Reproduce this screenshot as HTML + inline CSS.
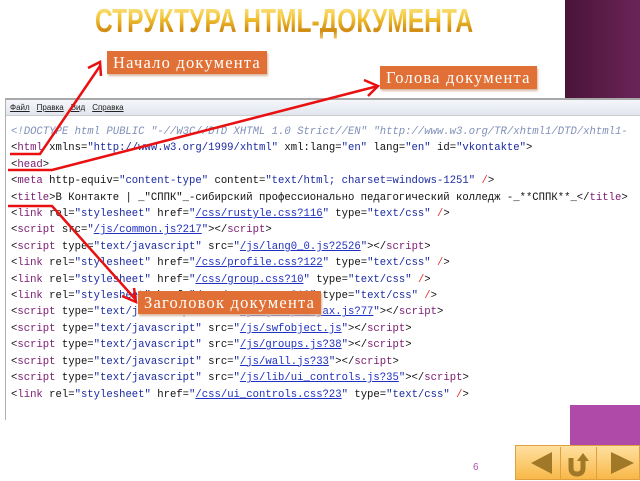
<!DOCTYPE html>
<html><head><meta charset="utf-8"><style>
body{margin:0;width:640px;height:480px;overflow:hidden;background:#fff;position:relative;font-family:"Liberation Sans",sans-serif}
.tr{position:absolute;left:565px;top:0;width:75px;height:98px;background:linear-gradient(90deg,#4a1438,#6a2458)}
.title{position:absolute;left:95px;top:2px;width:560px;font-weight:bold;font-size:33px;line-height:38px;color:#e0a820;background:linear-gradient(#fff2a0,#f0c030 45%,#d08a10 75%,#f6d070);-webkit-background-clip:text;background-clip:text;-webkit-text-fill-color:transparent;transform:scaleX(.745);transform-origin:left top;white-space:nowrap}
.lbl{position:absolute;background:#e07035;color:#fff;font-family:"Liberation Serif","DejaVu Serif",serif;font-size:16.5px;line-height:23px;padding:0 6px;letter-spacing:1.2px;box-shadow:1px 2px 2px #d8b8a0;white-space:nowrap}
.shot{position:absolute;left:5px;top:98px;width:640px;height:320px;border-top:2px solid #a8a8a8;border-left:1px solid #b0b0b0}
.menu{height:15px;background:linear-gradient(#f4f6fa,#e2e6ee);font-size:8px;line-height:15px;color:#222;padding-left:4px;border-bottom:1px solid #ccc}
.menu span{margin-right:7px;text-decoration:underline}
pre{margin:0;position:absolute;left:5px;top:24px;font-family:"Liberation Mono",monospace;font-size:10.6px;line-height:16.4px;color:#111}
.t{color:#7a1a70}.v{color:#1a2aa0}.u{color:#2030c0;text-decoration:underline}.r{color:#e03030}.c{color:#8090b8;font-style:italic}
.pur{position:absolute;left:570px;top:405px;width:70px;height:42px;background:#b04aa8}
.nav{position:absolute;left:515px;top:445px;width:125px;height:35px;background:linear-gradient(#ffe0a0,#f8b848);border:1px solid #e0a040;box-sizing:border-box}
.pg{position:absolute;left:473px;top:462px;font-size:10px;color:#b050b0}
</style></head><body>
<div class="tr"></div>
<div class="title">СТРУКТУРА HTML-ДОКУМЕНТА</div>
<div class="lbl" style="left:107px;top:51px">Начало документа</div>
<div class="lbl" style="left:380px;top:66px">Голова документа</div>
<div class="shot">
<div class="menu"><span>Файл</span><span>Правка</span><span>Вид</span><span>Справка</span></div>
<pre><span class="c">&lt;!DOCTYPE html PUBLIC "-//W3C//DTD XHTML 1.0 Strict//EN" "http://www.w3.org/TR/xhtml1/DTD/xhtml1-</span>
&lt;<span class="t">html</span> xmlns=<span class="v">"http://www.w3.org/1999/xhtml"</span> xml:lang=<span class="v">"en"</span> lang=<span class="v">"en"</span> id=<span class="v">"vkontakte"</span>&gt;
&lt;<span class="t">head</span>&gt;
&lt;<span class="t">meta</span> http-equiv=<span class="v">"content-type"</span> content=<span class="v">"text/html; charset=windows-1251"</span> <span class="r">/</span>&gt;
&lt;<span class="t">title</span>&gt;В Контакте | _"СППК"_-сибирский профессионально педагогический колледж -_**СППК**_&lt;/<span class="t">title</span>&gt;
&lt;<span class="t">link</span> rel=<span class="v">"stylesheet"</span> href=<span class="v">"<span class="u">/css/rustyle.css?116</span>"</span> type=<span class="v">"text/css"</span> <span class="r">/</span>&gt;
&lt;<span class="t">script</span> src=<span class="v">"<span class="u">/js/common.js?217</span>"</span>&gt;&lt;/<span class="t">script</span>&gt;
&lt;<span class="t">script</span> type=<span class="v">"text/javascript"</span> src=<span class="v">"<span class="u">/js/lang0_0.js?2526</span>"</span>&gt;&lt;/<span class="t">script</span>&gt;
&lt;<span class="t">link</span> rel=<span class="v">"stylesheet"</span> href=<span class="v">"<span class="u">/css/profile.css?122</span>"</span> type=<span class="v">"text/css"</span> <span class="r">/</span>&gt;
&lt;<span class="t">link</span> rel=<span class="v">"stylesheet"</span> href=<span class="v">"<span class="u">/css/group.css?10</span>"</span> type=<span class="v">"text/css"</span> <span class="r">/</span>&gt;
&lt;<span class="t">link</span> rel=<span class="v">"stylesheet"</span> href=<span class="v">"<span class="u">/css/groups.css?12</span>"</span> type=<span class="v">"text/css"</span> <span class="r">/</span>&gt;
&lt;<span class="t">script</span> type=<span class="v">"text/javascript"</span> src=<span class="v">"<span class="u">/js/groups_ajax.js?77</span>"</span>&gt;&lt;/<span class="t">script</span>&gt;
&lt;<span class="t">script</span> type=<span class="v">"text/javascript"</span> src=<span class="v">"<span class="u">/js/swfobject.js</span>"</span>&gt;&lt;/<span class="t">script</span>&gt;
&lt;<span class="t">script</span> type=<span class="v">"text/javascript"</span> src=<span class="v">"<span class="u">/js/groups.js?38</span>"</span>&gt;&lt;/<span class="t">script</span>&gt;
&lt;<span class="t">script</span> type=<span class="v">"text/javascript"</span> src=<span class="v">"<span class="u">/js/wall.js?33</span>"</span>&gt;&lt;/<span class="t">script</span>&gt;
&lt;<span class="t">script</span> type=<span class="v">"text/javascript"</span> src=<span class="v">"<span class="u">/js/lib/ui_controls.js?35</span>"</span>&gt;&lt;/<span class="t">script</span>&gt;
&lt;<span class="t">link</span> rel=<span class="v">"stylesheet"</span> href=<span class="v">"<span class="u">/css/ui_controls.css?23</span>"</span> type=<span class="v">"text/css"</span> <span class="r">/</span>&gt;</pre>
</div>
<div class="lbl" style="left:138px;top:291px">Заголовок документа</div>
<svg width="640" height="480" style="position:absolute;left:0;top:0" fill="none" stroke="#e81010" stroke-width="2.5">
<path d="M10 154H40L100 66"/><path d="M88 68L100 62L101 76"/>
<path d="M8 170H52L378 86"/><path d="M364 80L378 86L368 96"/>
<path d="M8 206H52L136 300"/><path d="M122 296L136 302L134 288"/>
</svg>
<div class="pur"></div>
<div class="nav">
<svg width="125" height="35" style="position:absolute;left:0;top:0">
<path d="M15 17L36 6V28Z" fill="#a07828"/>
<rect x="44" y="1" width="1" height="33" fill="#e0a040"/>
<path d="M55 12V22Q55 28 61 28Q67 28 67 22V14" stroke="#a07828" stroke-width="5" fill="none"/>
<path d="M61 15L67 7L73 15Z" fill="#a07828"/>
<rect x="80" y="1" width="1" height="33" fill="#e0a040"/>
<path d="M95 6L118 17L95 28Z" fill="#a07828"/>
</svg></div>
<div class="pg">6</div>
</body></html>
